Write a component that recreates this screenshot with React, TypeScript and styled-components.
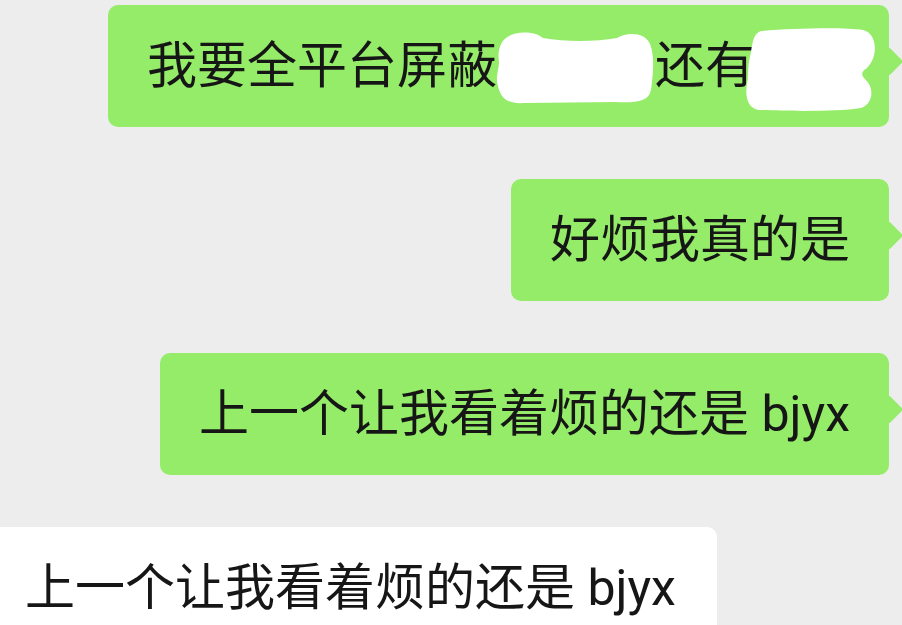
import styled, { createGlobalStyle } from 'styled-components';
import { ReactElement } from 'react';

const GlobalStyle = createGlobalStyle`
  html, body {
    margin: 0;
    padding: 0;
    background: #ededed;
  }
  body {
    width: 902px;
    height: 625px;
    overflow: hidden;
  }
`;

const Thread = styled.div`
  display: flex;
  flex-direction: column;
  gap: 52px;
  padding: 5px 13px 0 0;
  font-family: Roboto, 'Noto Sans CJK SC', sans-serif;
`;

const Row = styled.div<{ $mine?: boolean }>`
  display: flex;
  justify-content: ${({ $mine }) => ($mine ? 'flex-end' : 'flex-start')};
`;

const Bubble = styled.div<{ $mine?: boolean }>`
  position: relative;
  box-sizing: border-box;
  height: 122px;
  padding: ${({ $mine }) => ($mine ? '36px 39px 0 39px' : '36px 41px 0 38px')};
  margin-left: ${({ $mine }) => ($mine ? '0' : '-13px')};
  border-radius: 10px;
  background: ${({ $mine }) => ($mine ? '#95ec69' : '#ffffff')};
  color: #161616;
  font-size: 50px;
  line-height: 50px;
  white-space: nowrap;

  &::after {
    content: '';
    display: ${({ $mine }) => ($mine ? 'block' : 'none')};
    position: absolute;
    top: 46px;
    right: -10px;
    width: 21px;
    height: 21px;
    border-radius: 3px;
    background: #95ec69;
    transform: rotate(45deg);
  }
`;

// hand-drawn white scribble covering part of a message
const Scribble = styled.span<{ $w: number }>`
  position: relative;
  display: inline-block;
  width: ${({ $w }) => $w}px;
  height: 50px;
  vertical-align: top;

  & > svg {
    position: absolute;
    overflow: visible;
  }
`;

function CoverA(): ReactElement {
  return (
    <Scribble $w={158}>
      <svg width="160" height="78" viewBox="0 0 160 78" style={{ left: -2, top: -13 }}>
        <path
          fill="#fff"
          d="M3 58 C0 48 4 42 4 34 C2 22 6 12 14 8 C22 3 40 3 48 10 C70 14 100 14 122 10 C132 4 150 4 155 16 C160 28 158 48 156 62 C154 74 140 75 120 74 L30 75 C14 76 6 72 3 58 Z"
        />
      </svg>
    </Scribble>
  );
}

function CoverB(): ReactElement {
  return (
    <Scribble $w={95}>
      <svg width="130" height="84" viewBox="0 0 130 84" style={{ left: -10, top: -13 }}>
        <path
          fill="#fff"
          d="M16 3 C50 0 100 -1 118 2 C132 5 134 28 122 40 C116 44 116 47 120 51 C130 60 128 76 116 80 C90 84 40 83 14 82 C2 80 0 68 2 56 C4 46 2 40 6 24 C8 10 10 5 16 3 Z"
        />
      </svg>
    </Scribble>
  );
}

export default function App(): ReactElement {
  return (
    <>
      <GlobalStyle />
      <Thread>
        <Row $mine>
          <Bubble $mine>
            我要全平台屏蔽
            <CoverA />
            还有
            <CoverB />
          </Bubble>
        </Row>
        <Row $mine>
          <Bubble $mine>好烦我真的是</Bubble>
        </Row>
        <Row $mine>
          <Bubble $mine>上一个让我看着烦的还是 bjyx</Bubble>
        </Row>
        <Row>
          <Bubble>上一个让我看着烦的还是 bjyx</Bubble>
        </Row>
      </Thread>
    </>
  );
}
